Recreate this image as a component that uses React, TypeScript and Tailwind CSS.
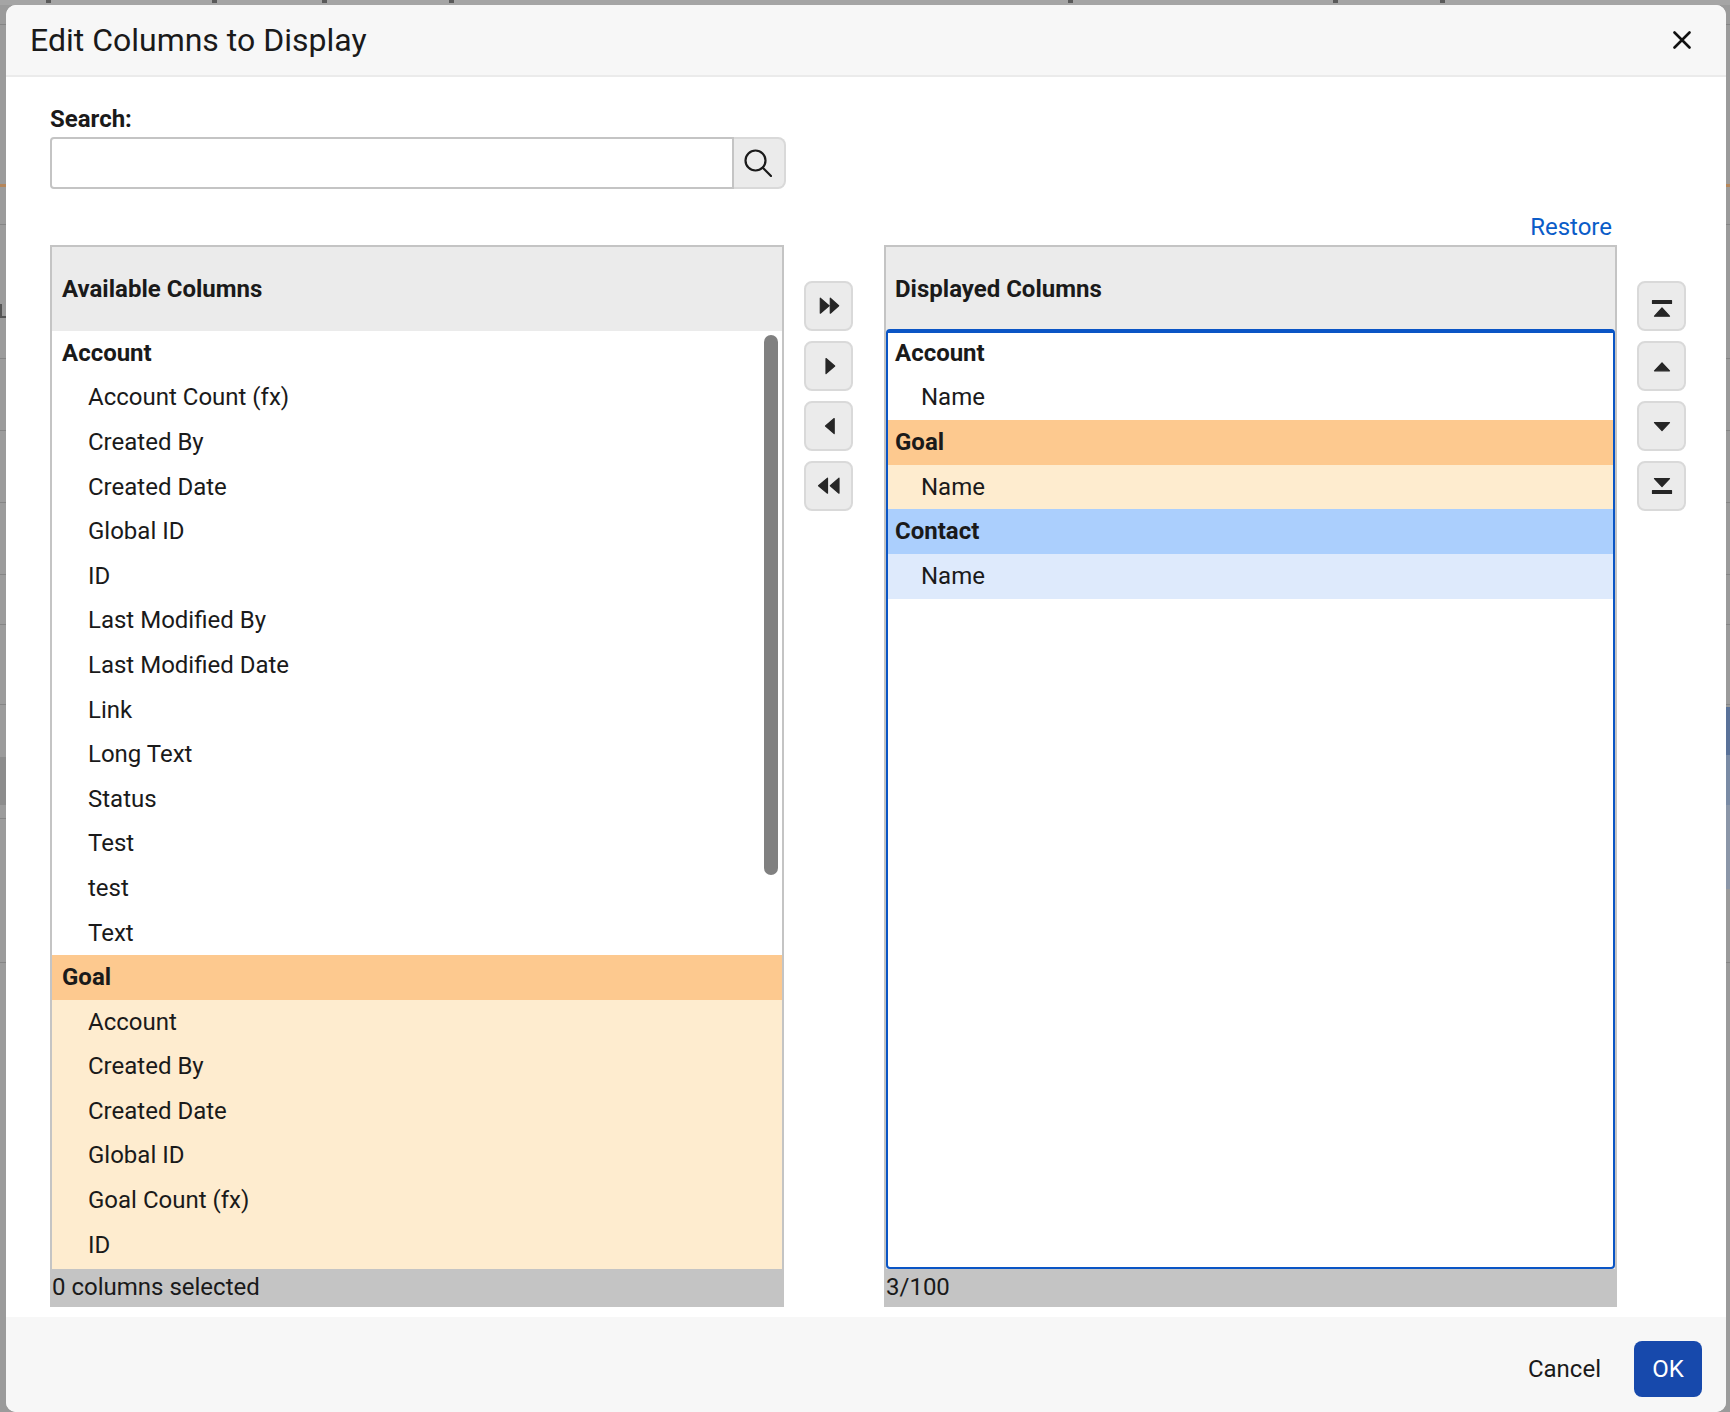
const availableAccount = [
  "Account Count (fx)",
  "Created By",
  "Created Date",
  "Global ID",
  "ID",
  "Last Modified By",
  "Last Modified Date",
  "Link",
  "Long Text",
  "Status",
  "Test",
  "test",
  "Text",
]

const availableGoal = ["Account", "Created By", "Created Date", "Global ID", "Goal Count (fx)", "ID"]

function GroupRow({ label, className = "", inset = "pl-[10px]" }: { label: string; className?: string; inset?: string }) {
  return (
    <div className={`h-[44.6px] shrink-0 flex items-center pb-[1px] font-bold text-[24px] ${inset} ${className}`}>
      {label}
    </div>
  )
}

function ItemRow({ label, className = "", inset = "pl-[36px]" }: { label: string; className?: string; inset?: string }) {
  return (
    <div className={`h-[44.6px] shrink-0 flex items-center pb-[1px] text-[24px] ${inset} ${className}`}>
      {label}
    </div>
  )
}

function IconButton({ children }: { children: React.ReactNode }) {
  return (
    <button className="w-[49px] h-[50px] flex items-center justify-center bg-[#ebebeb] border-2 border-[#d9d9d9] rounded-[8px]">
      <svg viewBox="0 0 24 24" className="w-6 h-6 fill-[#262626]" stroke="#262626" strokeWidth="1.2" strokeLinejoin="round">
        {children}
      </svg>
    </button>
  )
}

function PageBehind() {
  const rules = [24, 224, 358, 430, 502, 574, 624, 704, 818, 962]
  const marks = [46, 212, 322, 449, 1068, 1333, 1440]
  return (
    <>
      <div className="absolute left-0 right-0 top-0 h-[5px] bg-[#a5a5a5]" />
      {rules.map((y) => (
        <div key={y} className="absolute left-0 right-0 h-[1px] bg-[#858585]" style={{ top: y }} />
      ))}
      {marks.map((x) => (
        <div key={x} className="absolute top-0 w-[5px] h-[3px] bg-[#5a5a5a]" style={{ left: x }} />
      ))}
      <div className="absolute left-0 right-0 top-[184px] h-[3px] bg-[#b5865a]" />
      <div className="absolute left-0 top-[304px] w-[6px] h-[14px] border-l-2 border-b-2 border-[#555]" />
      <div className="absolute right-0 top-[707px] w-[4px] h-[48px] bg-[#5a7299]" />
      <div className="absolute right-0 top-[755px] w-[4px] h-[50px] bg-[#7a8ba5]" />
      <div className="absolute right-0 top-[805px] w-[4px] h-[84px] bg-[#8b96a8]" />
      <div className="absolute left-0 top-[757px] w-[6px] h-[48px] bg-[#8c8c8c]" />
    </>
  )
}

export default function App() {
  return (
    <div className="relative w-[1730px] h-[1412px] overflow-hidden bg-[#9b9b9b] pt-[5px] pl-[6px] font-['Roboto',sans-serif] text-[#1a1a1a]">
      <PageBehind />
      <div className="relative w-[1720px] h-[1407px] bg-white rounded-[10px] flex flex-col overflow-hidden">
        <div className="h-[72px] shrink-0 bg-[#f7f7f7] border-b-2 border-[#ebebeb] flex items-center justify-between pl-[24px] pr-[35px]">
          <h1 className="text-[32px]">Edit Columns to Display</h1>
          <svg viewBox="0 0 18 18" className="w-[18px] h-[18px]" stroke="#111" strokeWidth="2.6" strokeLinecap="round">
            <path d="M1.5 1.5 L16.5 16.5 M16.5 1.5 L1.5 16.5" />
          </svg>
        </div>

        <div className="flex-1 flex flex-col pl-[44px] pt-[25px]">
          <label className="h-[35px] font-bold text-[24px] leading-[35px]">Search:</label>
          <div className="flex w-[736px] h-[52px]">
            <input className="w-[684px] h-full bg-white border-2 border-[#c4c4c4] rounded-l-[4px]" />
            <button className="w-[52px] h-full flex items-center justify-center pr-[3px] bg-[#ebebeb] border-2 border-l-0 border-[#d9d9d9] rounded-r-[8px]">
              <svg viewBox="0 0 28 28" className="w-7 h-7" fill="none" stroke="#1a1a1a" strokeWidth="2.2">
                <circle cx="11.5" cy="11.5" r="10" />
                <path d="M18.8 18.8 L27 27" strokeLinecap="round" />
              </svg>
            </button>
          </div>

          <div className="h-[56px] w-[1562px] flex items-center justify-end pt-[20px]">
            <a className="text-[24px] text-[#0a5cc8]">Restore</a>
          </div>

          <div className="flex">
            <section className="w-[734px] h-[1062px] flex flex-col">
              <div className="h-[86px] shrink-0 bg-[#ebebeb] border-2 border-b-0 border-[#c4c4c4] flex items-center pl-[10px] font-bold text-[24px]">
                Available Columns
              </div>
              <div className="relative flex-1 min-h-0 overflow-hidden border-x-2 border-[#c4c4c4] flex flex-col">
                <GroupRow label="Account" />
                {availableAccount.map((c) => (
                  <ItemRow key={c} label={c} />
                ))}
                <GroupRow label="Goal" className="bg-[#fdc98f]" />
                {availableGoal.map((c) => (
                  <ItemRow key={c} label={c} className="bg-[#feeccf]" />
                ))}
                <div className="flex-1 bg-[#feeccf]" />
                <div className="absolute right-[4px] top-[4px] w-[14px] h-[540px] rounded-full bg-[#808080]" />
              </div>
              <div className="h-[38px] shrink-0 bg-[#c4c4c4] pl-[2px] text-[24px] leading-[36px]">0 columns selected</div>
            </section>

            <div className="ml-[20px] mt-[36px] flex flex-col gap-[10px]">
              <IconButton>
                <path d="M3.3 4.2 L12 11.7 L3.3 19.2 Z M13.3 4.2 L21.7 11.7 L13.3 19.2 Z" />
              </IconButton>
              <IconButton>
                <path d="M9 4.5 L17.7 12 L9 19.5 Z" />
              </IconButton>
              <IconButton>
                <path d="M17.2 4.5 L8.5 12 L17.2 19.5 Z" />
              </IconButton>
              <IconButton>
                <path d="M10.5 4.2 L1.5 11.7 L10.5 19.2 Z M22 4.2 L13.3 11.7 L22 19.2 Z" />
              </IconButton>
            </div>

            <section className="ml-[31px] w-[733px] h-[1062px] flex flex-col">
              <div className="h-[84px] shrink-0 bg-[#ebebeb] border-2 border-b-0 border-[#c4c4c4] flex items-center pl-[9px] pt-[2px] font-bold text-[24px]">
                Displayed Columns
              </div>
              <div className="flex-1 min-h-0 flex flex-col bg-[#ebebeb] border-x-2 border-[#c4c4c4]">
                <div className="flex-1 min-h-0 overflow-hidden bg-white border-2 border-t-[4px] border-[#0a55c5] rounded-[4px]">
                  <div className="-mt-[2px] flex flex-col">
                    <GroupRow label="Account" inset="pl-[7px]" />
                    <ItemRow label="Name" inset="pl-[33px]" />
                    <GroupRow label="Goal" inset="pl-[7px]" className="bg-[#fdc98f]" />
                    <ItemRow label="Name" inset="pl-[33px]" className="bg-[#feeccf]" />
                    <GroupRow label="Contact" inset="pl-[7px]" className="bg-[#abcffd]" />
                    <ItemRow label="Name" inset="pl-[33px]" className="bg-[#deeafc]" />
                  </div>
                </div>
              </div>
              <div className="h-[38px] shrink-0 bg-[#c4c4c4] pl-[2px] text-[24px] leading-[36px]">3/100</div>
            </section>

            <div className="ml-[20px] mt-[36px] flex flex-col gap-[10px]">
              <IconButton>
                <path d="M2.5 6.5 H21.5 V9.5 H2.5 Z M12 14 L19.5 22.2 H4.5 Z" />
              </IconButton>
              <IconButton>
                <path d="M12 8.8 L19.5 16.8 H4.5 Z" />
              </IconButton>
              <IconButton>
                <path d="M4.5 8.5 H19.5 L12 16.5 Z" />
              </IconButton>
              <IconButton>
                <path d="M4.5 4.5 H19.5 L12 12.5 Z M2.5 16.5 H21.5 V19.5 H2.5 Z" />
              </IconButton>
            </div>
          </div>
        </div>

        <div className="h-[95px] shrink-0 bg-[#f7f7f7] flex items-start justify-end pt-[24px] pr-[24px]">
          <button className="h-[56px] text-[24px] mr-[33px]">Cancel</button>
          <button className="w-[68px] h-[56px] bg-[#1749ac] text-white text-[24px] rounded-[8px]">OK</button>
        </div>
      </div>
    </div>
  )
}
